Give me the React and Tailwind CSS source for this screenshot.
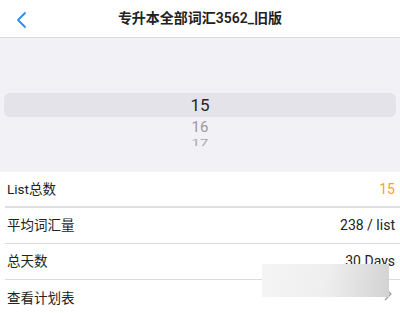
import React from "react";

const font = { fontFamily: 'Roboto, "Noto Sans CJK SC", sans-serif' };

function Row({ label, value, valueClass = "text-[#222]", border = "border-b border-[#dcdcdc]", children }) {
  return (
    <div className={`ml-[5px] h-9 flex items-center justify-between pl-[2px] pr-[5px] ${border}`}>
      <span className="text-[13.5px] text-[#222]">{label}</span>
      {value !== undefined ? <span className={`text-[14px] ${valueClass}`}>{value}</span> : children}
    </div>
  );
}

export default function App() {
  return (
    <div className="w-[400px] h-[313px] overflow-hidden bg-white relative" style={font}>
      <div className="h-[38px] flex items-center justify-center relative border-b border-[#dadada] bg-white">
        <svg className="absolute left-[15px] top-[11px]" width="14" height="18" viewBox="0 0 14 18">
          <path d="M10 2 L3 9 L10 16" fill="none" stroke="#2b8ef0" strokeWidth="1.8" strokeLinecap="round" strokeLinejoin="round" />
        </svg>
        <span className="text-[14px] font-semibold text-[#222]">专升本全部词汇3562_旧版</span>
      </div>
      <div className="h-[134px] bg-[#f2f1f6] pt-[55px] px-[4px] overflow-hidden">
        <div className="h-6 rounded-md bg-[#e4e3e9] flex items-center justify-center">
          <span className="text-[17px] font-normal text-[#262626] leading-none">15</span>
        </div>
        <div className="h-[21px] flex items-center justify-center">
          <span className="text-[15px] text-[#9b9b9b] leading-none">16</span>
        </div>
        <div className="h-[10px] flex items-center justify-center overflow-hidden">
          <span className="text-[15px] text-[#a8a8a8] leading-none inline-block" style={{ transform: "scaleY(0.55)" }}>17</span>
        </div>
      </div>
      <Row label="List总数" value="15" valueClass="text-[#f7a32b]" border="border-b-2 border-[#e0e0e0]" />
      <Row label="平均词汇量" value="238 / list" />
      <Row label="总天数" value="30 Days" />
      <Row label="查看计划表" border="">
        <svg width="8" height="14" viewBox="0 0 8 14" className="mb-[8px] mr-[3px]">
          <path d="M1 1 L7 7 L1 13" fill="none" stroke="#999" strokeWidth="1.2" />
        </svg>
      </Row>
      <div
        className="absolute left-[262px] top-[264px] w-[127px] h-[33px]"
        style={{ background: "linear-gradient(100deg, #f4f4f4 0%, #efefef 50%, #d2d2d2 100%)" }}
      />
    </div>
  );
}
